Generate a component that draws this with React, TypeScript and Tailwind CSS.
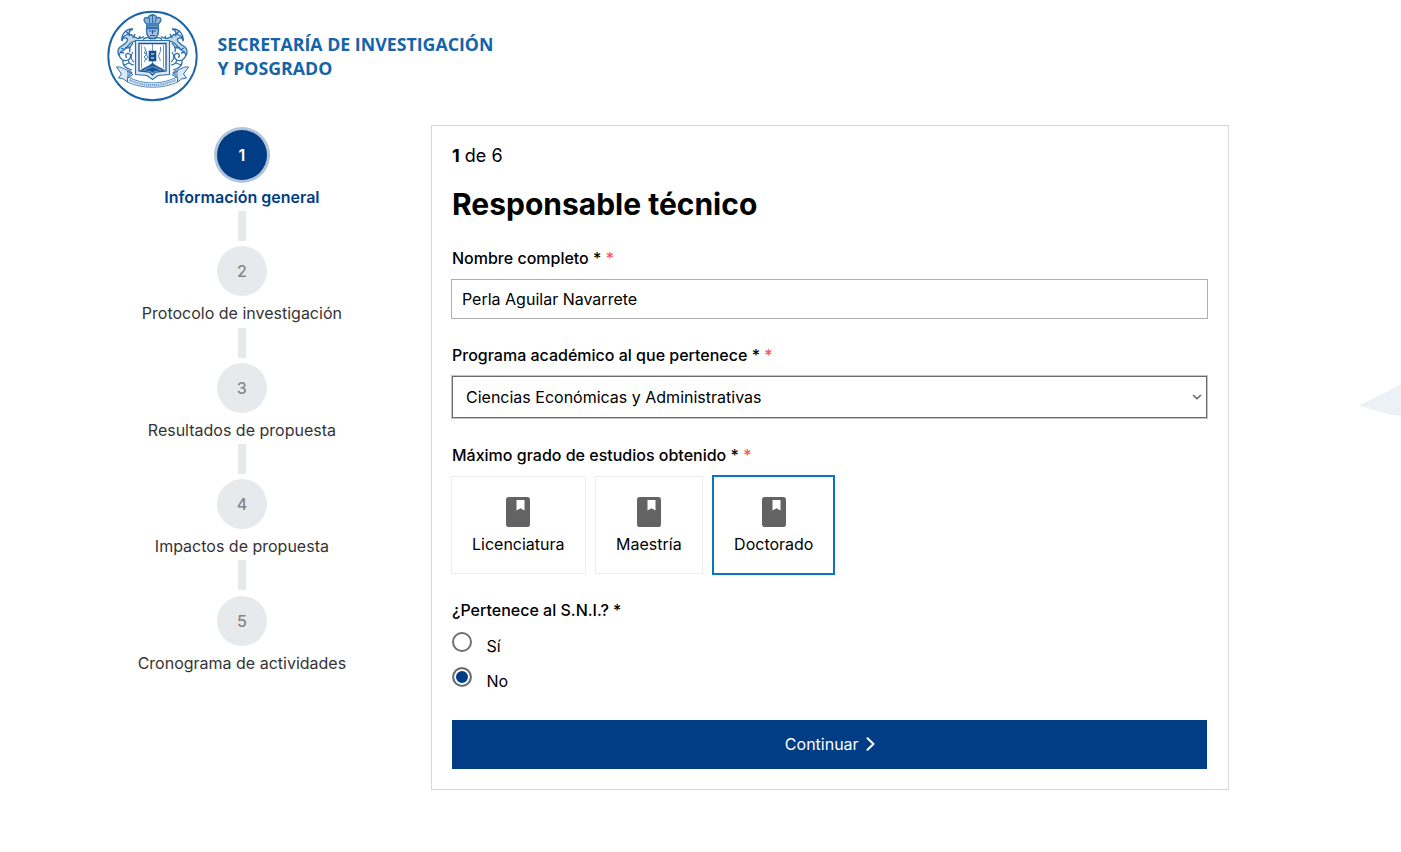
import { useState } from "react";

const steps = [
  "Información general",
  "Protocolo de investigación",
  "Resultados de propuesta",
  "Impactos de propuesta",
  "Cronograma de actividades",
];

function Scroll() {
  return (
    <g>
      <path
        d="M37 26.5C33 30 27 28 24 24.500C20 23 14.500 27 14.800 31C15 28.500 18 27 20 28.500C22 31 18 34 13 37C10.500 39.500 10.500 43 12 45C13 41 18 40 21 36C24 32 26 31 29 31.500"
        fill="#c3d7e9"
        strokeWidth="1.3"
      />
      <path d="M15 31c-1-6 4-13 11-12-4 1-5 4-3 7M19 21l3 4M28 24l-2 4M33 26l-1 3" strokeWidth="1.5" />
      <path d="M12 45c1 4 5 7 9 5 4-2 3-7-.5-6.500-2.500.5-2.500 3.500-.5 4M26 33c-3 3-4 5-3 9M14 38l4 2M13 42l4 1M24 37l-6 1" strokeWidth="1.300" />
      <path d="M16 50c-1 5 3 9 9 10M21 50c1 3 3 5 6 5M26 42c-3 4-2 8 1 10M17 55l5-2" strokeWidth="1.200" />
    </g>
  );
}

function Ribbon() {
  return (
    <g>
      <path d="M9.500 57c5-1 8 3 14 4l2 4-5 3v4l-4-3-5-1 3-4z" fill="#dce8f3" strokeWidth="1" />
      <path d="M20 61.500l5 1-5 5" fill="#91b4d5" strokeWidth="1" />
    </g>
  );
}

function Seal() {
  return (
    <svg className="h-[92px] w-[91px] shrink-0" viewBox="0 0 91 92" fill="none" stroke="#2c70b0">
      <circle cx="45.5" cy="46" r="44.2" strokeWidth="1.9" stroke="#1a64a8" fill="white" />
      <path d="M39.500 14c-5-5-1-8 2-6 0-2 2-3 4-3s4 1 4 3c3-2 7 1 2 6z" strokeWidth="1.300" fill="#91b4d5" />
      <path d="M45.500 13V4M44 5.500h3M42 8l1 5M49 8l-1 5" strokeWidth="1" />
      <path d="M39.500 15h12v2.500h-12z" strokeWidth="1" fill="#5f94c6" />
      <path d="M39.500 18.500h12l-.5 6-3 4h-5l-3-4z" strokeWidth="1.400" fill="#a8c4df" />
      <path d="M42 21h2.500M46.500 21H49M43 25.500h5M45.500 20v4" stroke="#1a5597" strokeWidth="1.200" />
      <path d="M36 29.500c3-3 5-2 7-1h5c2-1 4-2 7 1" strokeWidth="1.400" />
      <Scroll />
      <g transform="translate(91 0) scale(-1 1)">
        <Scroll />
      </g>
      <path d="M28.500 30.500h34v34l-11.500 1-5.500 4-5.500-4-11.500-1z" strokeWidth="1.200" fill="#dce8f3" />
      <path d="M32 33.500h27v27.500l-10.500 1-3 3-3-3-10.500-1z" strokeWidth="1.300" stroke="#1a5597" fill="white" />
      <path d="M34.500 35v23M56.500 35v23M45.500 34v28" strokeWidth=".700" />
      <path d="M33 60.500c4-3 9-4 12.500-7.500 3.500 3.500 8.500 4.500 12.500 7.500l-10 .5-2.500 2-2.500-2z" fill="#1a5597" strokeWidth=".500" />
      <path d="M37 60l8.500-3.500 8.500 3.500" stroke="#91b4d5" strokeWidth=".800" />
      <rect x="42" y="41" width="7" height="10" fill="#174f8c" stroke="#174f8c" strokeWidth=".6" />
      <path d="M44 44h3M44 48h3" stroke="#a8c4df" strokeWidth="1.500" />
      <path d="M37 37l2 3-2 3 3 1-3 3 2 2-2 3M40 41l-1 3 2 3-2 3" strokeWidth=".900" />
      <path d="M53.500 37v4l-2 5 2 5" strokeWidth=".800" />
      <path d="M20.500 66.500c14 8.500 36 8.500 50 0v5.500c-14 7-36 7-50 0z" fill="#edf3f9" strokeWidth=".8" />
      <path d="M22.500 70c14 6.800 32 6.800 46 0" stroke="#6d9dcb" strokeWidth="2" strokeDasharray="1.400 .7" />
      <Ribbon />
      <g transform="translate(91 0) scale(-1 1)">
        <Ribbon />
      </g>
    </svg>
  );
}

function BookIcon() {
  return (
    <svg className="h-[30px] w-6" viewBox="0 0 24 30">
      <rect width="24" height="30" rx="2.8" fill="#636363" />
      <path d="M10.5 3h8v10.5l-4-2.2-4 2.2z" fill="white" />
    </svg>
  );
}

function Required() {
  return <span className="text-[#fa5252]"> *</span>;
}

export default function App() {
  const [degree, setDegree] = useState("Doctorado");
  const [sni, setSni] = useState("No");
  const degrees = ["Licenciatura", "Maestría", "Doctorado"];

  return (
    <div className="relative h-[852px] overflow-hidden bg-white font-[Inter,sans-serif] text-base text-black">
      <svg className="absolute top-[384px] right-0 h-8 w-[42px]" viewBox="0 0 42 32">
        <path d="M0 21.5L28 7.5 42 0v31.5Q30 31 23 28.5z" fill="#ebf1f5" />
      </svg>

      <header className="flex h-[125px] items-start gap-[19.5px] pt-[10px] pl-[107px]">
        <Seal />
        <div className="pt-[22px] font-['Open_Sans',sans-serif] text-[17.75px] leading-6 font-bold text-[#1464aa]">
          SECRETARÍA DE INVESTIGACIÓN
          <br />Y POSGRADO
        </div>
      </header>

      <div className="flex items-start">
        <nav className="ml-[107.4px] flex w-[269px] flex-col items-center pt-[5px]">
          {steps.map((label, i) => (
            <div key={label} className="flex h-[116.4px] flex-col items-center">
              <div
                className={
                  i === 0
                    ? "flex size-[50px] shrink-0 items-center justify-center rounded-full bg-[#003d84] font-semibold text-white ring-3 ring-[#b2c4da]"
                    : "flex size-[50px] shrink-0 items-center justify-center rounded-full bg-[#e7eaed] font-medium text-[#868686]"
                }
              >
                {i + 1}
              </div>
              <div
                className={
                  i === 0
                    ? "mt-[5px] leading-6 font-semibold whitespace-nowrap text-[#003d84]"
                    : "mt-[5px] leading-6 whitespace-nowrap text-[#343434]"
                }
              >
                {label}
              </div>
              {i < steps.length - 1 && <div className="mt-[2.3px] ml-px h-[30px] w-2 bg-[#e7eaed]" />}
            </div>
          ))}
        </nav>

        <main className="ml-[54.6px] h-[665px] w-[798px] border border-[#d5d8de] px-[20px] pt-[16px]">
          <p className="text-[18px] leading-7">
            <strong>1</strong> de 6
          </p>
          <h1 className="mt-[15px] text-[30px] leading-[38px] font-bold">Responsable técnico</h1>

          <label htmlFor="name" className="mt-[23px] block leading-6 font-medium">
            Nombre completo *<Required />
          </label>
          <input
            id="name"
            defaultValue="Perla Aguilar Navarrete"
            className="mt-[9px] -ml-px block h-10 w-[757.4px] border border-[#aeaeae] px-[10px]"
          />

          <div className="mt-6 leading-6 font-medium">
            Programa académico al que pertenece *<Required />
          </div>
          <button className="mt-[8px] -ml-px flex h-[44px] w-[757.4px] items-center justify-between border border-[#c4c4c4] text-left">
            <span className="flex h-full w-full items-center justify-between border border-[#6b6b6b] pr-1 pl-[13px]">
              Ciencias Económicas y Administrativas
              <svg className="h-[6px] w-[10px]" viewBox="0 0 10 6" fill="none" stroke="#6b6b6b" strokeWidth="1.6">
                <path d="M1 1l4 3.6L9 1" />
              </svg>
            </span>
          </button>

          <div className="mt-6 leading-6 font-medium">
            Máximo grado de estudios obtenido *<Required />
          </div>
          <div className="mt-[8px] -ml-px flex h-[100px] items-center gap-[9.5px]">
            {degrees.map((d) => (
              <button
                key={d}
                onClick={() => setDegree(d)}
                className={
                  d === degree
                    ? "flex h-[100px] flex-col items-center border-2 border-[#0b75c5] px-[20px] pt-5"
                    : "flex h-[98px] flex-col items-center border border-[#ecedef] px-5 pt-5"
                }
              >
                <BookIcon />
                <span className="mt-[5px] leading-6">{d}</span>
              </button>
            ))}
          </div>

          <div className="mt-[23px] leading-6 font-medium">¿Pertenece al S.N.I.? *</div>
          <div className="mt-[8px] ml-[0.4px]">
            {["Sí", "No"].map((option) => (
              <label key={option} className="flex h-[35px] items-start gap-[14px]">
                <input
                  type="radio"
                  name="sni"
                  checked={sni === option}
                  onChange={() => setSni(option)}
                  className="mt-[2px] size-5 appearance-none rounded-full border-2 border-[#707070] checked:bg-[#003d84] checked:shadow-[inset_0_0_0_2px_white]"
                />
                <span className="mt-1 leading-6">{option}</span>
              </label>
            ))}
          </div>

          <button className="mt-[20px] flex h-[49px] w-[755.5px] items-center justify-center gap-[7px] bg-[#003d84] pb-px text-white">
            Continuar
            <svg className="h-[14px] w-[9px]" viewBox="0 0 9 14" fill="none" stroke="white" strokeWidth="2" strokeLinecap="round" strokeLinejoin="round">
              <path d="M1.5 1.2L7.5 7l-6 5.8" />
            </svg>
          </button>
        </main>
      </div>
    </div>
  );
}
